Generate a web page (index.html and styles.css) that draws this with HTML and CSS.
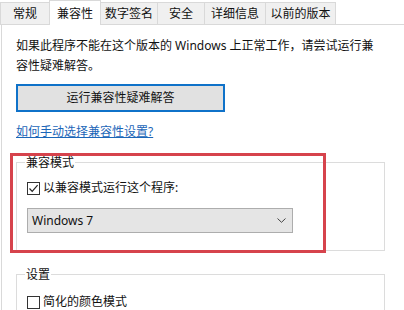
FILE: index.html
```html
<!DOCTYPE html>
<html lang="zh-CN">
<head>
	<meta charset="UTF-8">
	<title>属性 - 兼容性</title>
	<link rel="stylesheet" href="styles.css">
</head>
<body>
<div class="tabs">
	<div class="tab">常规</div>
	<div class="tab active">兼容性</div>
	<div class="tab">数字签名</div>
	<div class="tab">安全</div>
	<div class="tab">详细信息</div>
	<div class="tab">以前的版本</div>
</div>

<div class="panel">
	<p class="intro">如果此程序不能在这个版本的 Windows 上正常工作，请尝试运行兼容性疑难解答。</p>

	<div class="btn">运行兼容性疑难解答</div>

	<a class="help-link" href="#">如何手动选择兼容性设置?</a>

	<!-- compat mode group, red box is a highlight drawn over it -->
	<div class="group-wrap">
		<div class="group compat">
			<div class="group-title">兼容模式</div>
			<label class="check-row">
				<span class="checkbox">
					<svg width="11" height="11" viewBox="0 0 11 11"><polyline points="1.5,5.5 4.2,8.4 9.6,2.2" fill="none" stroke="#222" stroke-width="1.2"/></svg>
				</span>
				以兼容模式运行这个程序:
			</label>
			<div class="dropdown">
				<span>Windows 7</span>
				<svg width="9" height="5" viewBox="0 0 9 5"><polyline points="0.5,0.5 4.5,4.3 8.5,0.5" fill="none" stroke="#444" stroke-width="1"/></svg>
			</div>
		</div>
		<div class="highlight"></div>
	</div>

	<div class="group settings">
		<div class="group-title">设置</div>
		<label class="check-row">
			<span class="checkbox"></span>
			简化的颜色模式
		</label>
	</div>
</div>
</body>
</html>
```

FILE: styles.css
```css
* {
	box-sizing: border-box;
}

body {
	margin: 0;
	height: 310px;
	background: #fff;
	color: #111;
	font-family: "Noto Sans", "Noto Sans CJK SC", sans-serif;
	font-size: 12px;
	line-height: 20px;
	overflow: hidden;
}

/* TAB STRIP */
.tabs {
	display: flex;
	align-items: flex-end;
	height: 25px;
	border-bottom: 1px solid #d9d9d9;
}

.tab {
	height: 22px;
	line-height: 21px;
	text-align: center;
	background: #f0f0f0;
	border: 1px solid #d9d9d9;
	border-bottom: none;
	margin-right: -1px;
}

.tab:nth-child(1) { width: 50px; }
.tab:nth-child(2) { width: 52px; }
.tab:nth-child(3) { width: 58px; }
.tab:nth-child(4) { width: 48px; }
.tab:nth-child(5) { width: 62px; }
.tab:nth-child(6) { width: 71px; }

.tab.active {
	height: 25px;
	margin-bottom: -1px;
	line-height: 25px;
	background: #fff;
	position: relative;
	z-index: 1;
}

/* PANEL */
.panel {
	margin-left: 1px;
	border-left: 1px solid #d9d9d9;
	padding: 11px 19px 0 14px;
	height: 285px;
}

.intro {
	margin: 0;
	width: 368px;
}

.btn {
	width: 209px;
	height: 28px;
	margin-top: 8px;
	border: 2px solid #0f72c9;
	background: #e1e1e1;
	line-height: 24px;
	text-align: center;
}

.help-link {
	display: inline-block;
	margin-top: 10px;
	color: #1b66b8;
	text-decoration: underline;
}

/* GROUP BOXES */
.group-wrap {
	position: relative;
	margin-top: 20px;
}

.group {
	border: 1px solid #dcdcdc;
	padding: 0 10px 17px;
	width: 369px;
}

.group-title {
	display: table;
	margin: -10px 0 0 -2px;
	padding: 0 1px;
	background: #fff;
}

.check-row {
	display: flex;
	align-items: center;
	margin-top: 5px;
	height: 20px;
}

.checkbox {
	display: flex;
	align-items: center;
	justify-content: center;
	width: 13px;
	height: 13px;
	margin-right: 3px;
	border: 1px solid #333;
	background: #fff;
}

.dropdown {
	display: flex;
	align-items: center;
	justify-content: space-between;
	width: 266px;
	height: 25px;
	margin-top: 10px;
	padding: 0 6px 0 4px;
	background: #e5e5e5;
	border: 1px solid #adadad;
}

.highlight {
	position: absolute;
	left: -6px;
	top: -9px;
	width: 316px;
	height: 100px;
	border: 3px solid #d6434c;
}

.settings {
	margin-top: 23px;
	padding-bottom: 40px;
}

.settings .check-row {
	margin-top: 7px;
}
```
